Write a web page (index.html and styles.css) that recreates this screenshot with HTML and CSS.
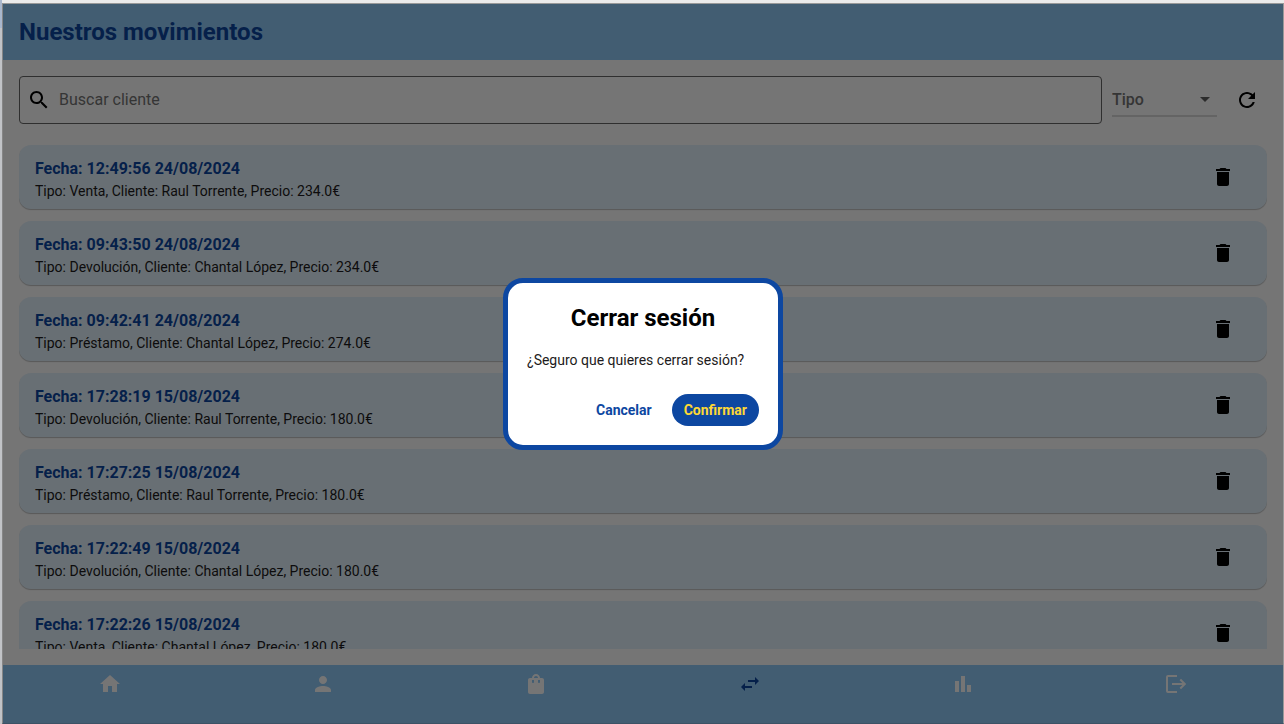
FILE: index.html
```html
<!DOCTYPE html>
<html lang="es">
<head>
<meta charset="utf-8">
<meta name="viewport" content="width=device-width, initial-scale=1">
<title>Nuestros movimientos</title>
<link rel="stylesheet" href="styles.css">
</head>
<body>
<svg class="sprite" aria-hidden="true">
  <symbol id="trash" viewBox="0 0 24 24"><path d="M6 19c0 1.1.9 2 2 2h8c1.1 0 2-.9 2-2V7H6v12zM19 4h-3.500l-1-1h-5l-1 1H5v2h14V4z"/></symbol>
</svg>
<div class="window">
  <div class="app">
    <header class="app-bar"><h1 class="app-title">Nuestros movimientos</h1></header>
    <main class="content">
      <div class="toolbar">
        <label class="search">
          <svg class="icon" viewBox="0 0 24 24" aria-hidden="true"><path d="M15.500 14h-.79l-.28-.27C15.410 12.590 16 11.110 16 9.500 16 5.910 13.090 3 9.500 3S3 5.910 3 9.500 5.910 16 9.500 16c1.610 0 3.090-.59 4.230-1.570l.27.28v.79l5 4.990L20.490 19l-4.990-5zm-6 0C7.010 14 5 11.990 5 9.500S7.010 5 9.500 5 14 7.010 14 9.500 11.990 14 9.500 14z"/></svg>
          <input class="search-input" type="text" placeholder="Buscar cliente" aria-label="Buscar cliente">
        </label>
        <div class="filter">
          <select class="filter-select" aria-label="Tipo"><option>Tipo</option><option>Venta</option><option>Devolución</option><option>Préstamo</option></select>
          <svg class="icon filter-arrow" viewBox="0 0 24 24" aria-hidden="true"><path d="M7 10l5 5 5-5z"/></svg>
        </div>
        <button class="icon-button" type="button" aria-label="Recargar"><svg class="icon" viewBox="0 0 24 24"><path d="M17.650 6.350C16.200 4.900 14.210 4 12 4c-4.420 0-7.990 3.580-7.990 8s3.570 8 7.990 8c3.730 0 6.840-2.550 7.730-6h-2.080c-.82 2.330-3.040 4-5.650 4-3.310 0-6-2.690-6-6s2.690-6 6-6c1.660 0 3.140.69 4.220 1.780L13 11h7V4l-2.350 2.350z"/></svg></button>
      </div>
      <ul class="list">
        <li class="card"><div class="card-text"><h2 class="card-title">Fecha: 12:49:56 24/08/2024</h2><p class="card-detail">Tipo: Venta, Cliente: Raul Torrente, Precio: 234.0€</p></div><button class="icon-button" type="button" aria-label="Eliminar"><svg class="icon"><use href="#trash"/></svg></button></li>
        <li class="card"><div class="card-text"><h2 class="card-title">Fecha: 09:43:50 24/08/2024</h2><p class="card-detail">Tipo: Devolución, Cliente: Chantal López, Precio: 234.0€</p></div><button class="icon-button" type="button" aria-label="Eliminar"><svg class="icon"><use href="#trash"/></svg></button></li>
        <li class="card"><div class="card-text"><h2 class="card-title">Fecha: 09:42:41 24/08/2024</h2><p class="card-detail">Tipo: Préstamo, Cliente: Chantal López, Precio: 274.0€</p></div><button class="icon-button" type="button" aria-label="Eliminar"><svg class="icon"><use href="#trash"/></svg></button></li>
        <li class="card"><div class="card-text"><h2 class="card-title">Fecha: 17:28:19 15/08/2024</h2><p class="card-detail">Tipo: Devolución, Cliente: Raul Torrente, Precio: 180.0€</p></div><button class="icon-button" type="button" aria-label="Eliminar"><svg class="icon"><use href="#trash"/></svg></button></li>
        <li class="card"><div class="card-text"><h2 class="card-title">Fecha: 17:27:25 15/08/2024</h2><p class="card-detail">Tipo: Préstamo, Cliente: Raul Torrente, Precio: 180.0€</p></div><button class="icon-button" type="button" aria-label="Eliminar"><svg class="icon"><use href="#trash"/></svg></button></li>
        <li class="card"><div class="card-text"><h2 class="card-title">Fecha: 17:22:49 15/08/2024</h2><p class="card-detail">Tipo: Devolución, Cliente: Chantal López, Precio: 180.0€</p></div><button class="icon-button" type="button" aria-label="Eliminar"><svg class="icon"><use href="#trash"/></svg></button></li>
        <li class="card"><div class="card-text"><h2 class="card-title">Fecha: 17:22:26 15/08/2024</h2><p class="card-detail">Tipo: Venta, Cliente: Chantal López, Precio: 180.0€</p></div><button class="icon-button" type="button" aria-label="Eliminar"><svg class="icon"><use href="#trash"/></svg></button></li>
      </ul>
    </main>
    <nav class="tabs" aria-label="Principal">
      <a class="tab" href="#inicio" aria-label="Inicio"><svg class="icon" viewBox="0 0 24 24"><path d="M10 20v-6h4v6h5v-8h3L12 3 2 12h3v8z"/></svg></a>
      <a class="tab" href="#clientes" aria-label="Clientes"><svg class="icon" viewBox="0 0 24 24"><path d="M12 12c2.210 0 4-1.790 4-4s-1.790-4-4-4-4 1.790-4 4 1.790 4 4 4zm0 2c-2.670 0-8 1.340-8 4v2h16v-2c0-2.660-5.330-4-8-4z"/></svg></a>
      <a class="tab" href="#productos" aria-label="Productos"><svg class="icon" viewBox="0 0 24 24"><path d="M18 6h-2c0-2.210-1.790-4-4-4S8 3.790 8 6H6c-1.100 0-2 .9-2 2v12c0 1.100.9 2 2 2h12c1.100 0 2-.9 2-2V8c0-1.100-.9-2-2-2zm-8 4c0 .55-.45 1-1 1s-1-.45-1-1V8h2v2zm2-6c1.100 0 2 .9 2 2h-4c0-1.100.9-2 2-2zm4 6c0 .55-.45 1-1 1s-1-.45-1-1V8h2v2z"/></svg></a>
      <a class="tab tab-active" href="#movimientos" aria-label="Movimientos" aria-current="page"><svg class="icon" viewBox="0 0 24 24"><path d="M6.990 11L3 15l3.990 4v-3H14v-2H6.990v-3zM21 9l-3.990-4v3H10v2h7.010v3L21 9z"/></svg></a>
      <a class="tab" href="#estadisticas" aria-label="Estadísticas"><svg class="icon" viewBox="0 0 24 24"><path d="M4 9h4v11H4zm12 4h4v7h-4zm-6-9h4v16h-4z"/></svg></a>
      <a class="tab" href="#salir" aria-label="Cerrar sesión"><svg class="icon icon-line" viewBox="0 0 24 24"><path d="M13 4H4a1 1 0 0 0-1 1v14a1 1 0 0 0 1 1h9M8 12h13.500M16.300 7.500l4.500 4.500-4.500 4.500"/></svg></a>
    </nav>
    <div class="scrim">
      <dialog class="dialog" open aria-labelledby="dialog-title">
        <h2 class="dialog-title" id="dialog-title">Cerrar sesión</h2>
        <p class="dialog-text">¿Seguro que quieres cerrar sesión?</p>
        <div class="dialog-actions">
          <button class="button" type="button">Cancelar</button>
          <button class="button button-filled" type="button">Confirmar</button>
        </div>
      </dialog>
    </div>
  </div>
</div>
</body>
</html>
```

FILE: styles.css
```css
* { box-sizing: border-box; }
body { margin: 0; font-family: Roboto, "Liberation Sans", sans-serif; color: #000; }
h1, h2, p, ul { margin: 0; padding: 0; }
button, input, select { font: inherit; color: inherit; }

.sprite { display: none; }
.icon { display: block; flex: none; width: 24px; height: 24px; fill: currentColor; }
.icon-line { fill: none; stroke: currentColor; stroke-width: 2; }

/* Window edge around the app */
.window {
  height: 100vh;
  padding: 3px 0 0 2px;
  background: linear-gradient(#a9b7cd 28px, #c1c3c7 28px) left / 2px 100% no-repeat, #ebebeb;
}
.app {
  position: relative;
  display: flex;
  flex-direction: column;
  height: 100%;
  border: 1px solid #999;
  border-left-color: #868686;
  border-bottom-color: #3c5265;
  background: #fff;
}

.app-bar { flex: none; padding: 12px 16px; background: #90caf9; }
.app-title { font-size: 24px; line-height: 32px; font-weight: 700; color: #0d47a1; }

.content { flex: 1; min-height: 0; display: flex; flex-direction: column; gap: 21px; padding: 16px; }
.toolbar { display: flex; align-items: center; gap: 10px; }
.search {
  flex: 1;
  display: flex;
  align-items: center;
  gap: 8px;
  height: 48px;
  padding: 0 7px;
  border: 1px solid #666;
  border-radius: 4px;
}
.search-input { flex: 1; min-width: 0; padding: 0; border: 0; outline: 0; background: none; font-size: 16px; line-height: 24px; }
.search-input::placeholder { color: #757575; opacity: 1; }
.filter { position: relative; width: 105px; height: 34px; color: #757575; border-bottom: 2px solid #dadada; }
.filter-select { width: 100%; height: 32px; padding: 2px 24px 0 0; border: 0; appearance: none; background: none; font-size: 16px; line-height: 24px; font-weight: 500; }
.filter-arrow { position: absolute; top: 4px; right: 0; color: #616161; pointer-events: none; }
.icon-button { display: grid; place-items: center; flex: none; width: 40px; height: 40px; padding: 0; border: 0; background: none; }

.list { flex: 1; min-height: 0; overflow-y: auto; scrollbar-width: none; list-style: none; display: flex; flex-direction: column; gap: 12px; }
.card {
  flex: none;
  display: flex;
  align-items: center;
  justify-content: space-between;
  padding: 8px 24px 8px 16px;
  border-radius: 12px;
  background: #e3f2fd;
  box-shadow: 0 1px 1px rgba(0, 0, 0, .25);
}
.card-text { padding-top: 4px; }
.card-title { font-size: 16px; line-height: 24px; font-weight: 700; color: #0d47a1; }
.card-detail { font-size: 14px; line-height: 20px; color: #1d1b20; }

.tabs { flex: none; display: grid; grid-template-columns: repeat(6, 1fr); height: 58px; padding-top: 7px; background: #90caf9; }
.tab { display: flex; justify-content: center; color: #fff; }
.tab-active { color: #0d47a1; }

.scrim { position: absolute; inset: 0; display: grid; place-items: center; background: rgba(0, 0, 0, .54); }
.dialog {
  position: static;
  min-width: 280px;
  margin: 0;
  padding: 19px;
  border: 5px solid #0d47a1;
  border-radius: 20px;
  background: #fff;
  color: #000;
}
.dialog-title { font-size: 24px; line-height: 32px; font-weight: 700; text-align: center; }
.dialog-text { margin: 16px 0 24px; font-size: 14px; line-height: 20px; color: #1d1b20; }
.dialog-actions { display: flex; justify-content: flex-end; gap: 8px; }
.button { height: 32px; padding: 0 12px; border: 0; border-radius: 16px; background: none; font-size: 14px; line-height: 20px; font-weight: 700; color: #0d47a1; }
.button-filled { background: #0d47a1; color: #fdd835; }
```
